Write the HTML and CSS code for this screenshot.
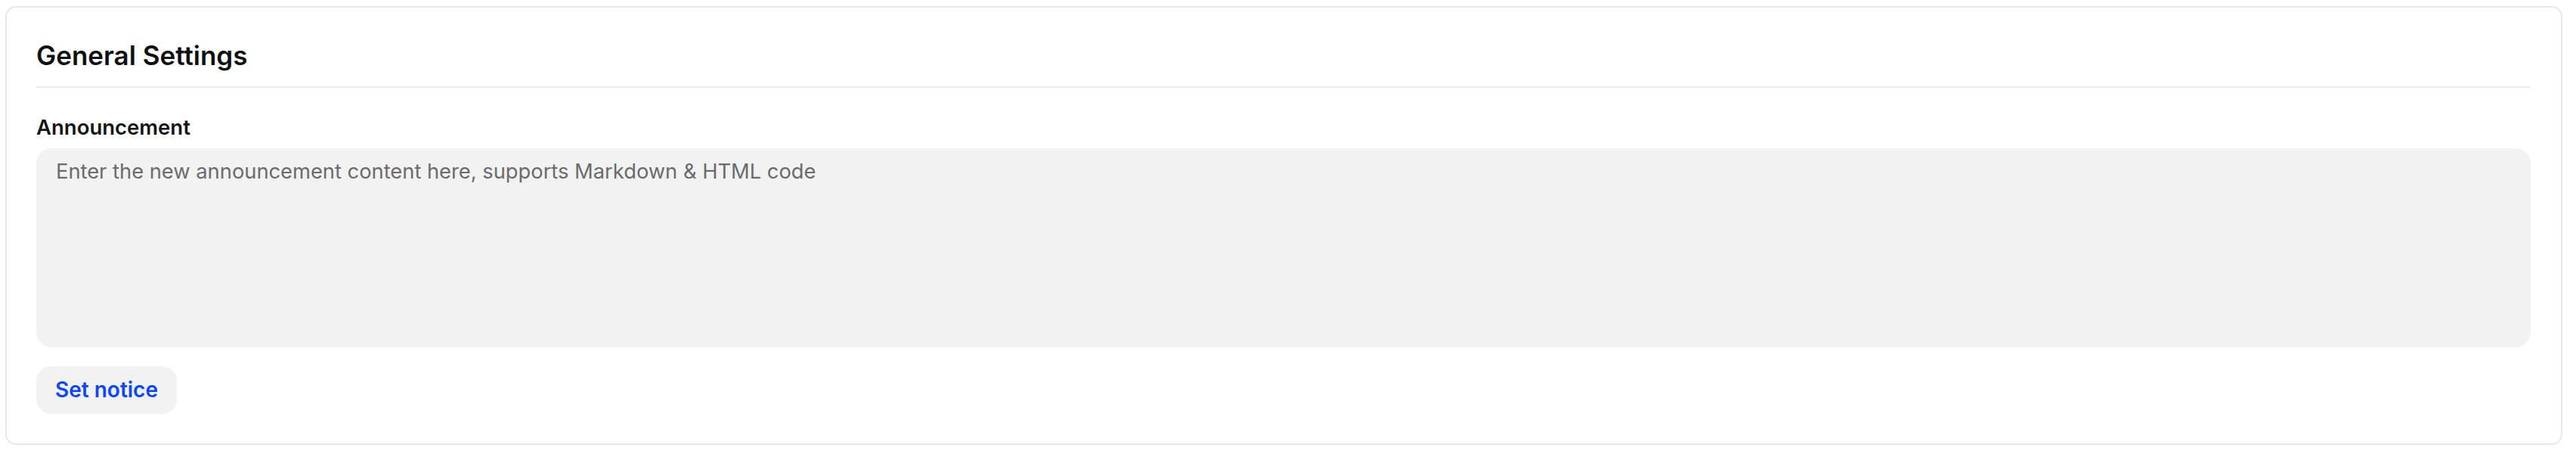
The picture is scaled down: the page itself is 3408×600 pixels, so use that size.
FILE: index.html
```html
<!DOCTYPE html>
<html lang="en">
<head>
  <meta charset="UTF-8">
  <title>General Settings</title>
  <link rel="stylesheet" href="styles.css">
</head>
<body>
  <div class="card">
    <h2 class="card-title">General Settings</h2>

    <div class="field">
      <label class="field-label" for="notice">Announcement</label>
      <textarea id="notice" class="notice-input" placeholder="Enter the new announcement content here, supports Markdown &amp; HTML code"></textarea>
    </div>

    <button class="set-notice">Set notice</button>
  </div>
</body>
</html>
```

FILE: styles.css
```css
  * {
    box-sizing: border-box;
    margin: 0;
    padding: 0;
  }

  body {
    background: white;
    font-family: "Inter", "Noto Sans", sans-serif;
    padding: 8px 18px 11px 7px;
  }

  .card {
    background: white;
    border: 2px solid #e8e8e8;
    border-radius: 14px;
    padding: 39px 40px 39px 39px;
    display: flex;
    flex-direction: column;
    align-items: flex-start;
  }

  .card-title {
    width: 100%;
    font-size: 35px;
    font-weight: 600;
    line-height: 48px;
    color: #111113;
    padding-bottom: 17px;
    border-bottom: 2px solid #ececec;
  }

  .field {
    width: 100%;
    display: flex;
    flex-direction: column;
    gap: 8px;
    margin-top: 33px;
  }

  .field-label {
    font-size: 27.5px;
    font-weight: 600;
    line-height: 39px;
    color: #151517;
  }

  .notice-input {
    width: 100%;
    height: 263px;
    padding: 10px 26px;
    background: #f2f2f2;
    border: none;
    outline: none;
    border-radius: 20px;
    resize: none;
    font-family: "Inter", "Noto Sans", sans-serif;
    font-size: 27.3px;
    line-height: 42px;
    color: #222;
  }

  .notice-input::placeholder {
    color: #6b6b6b;
  }

  .set-notice {
    margin-top: 25px;
    padding: 10px 25px;
    background: #f2f2f2;
    color: #0a45ff;
    border: none;
    border-radius: 20px;
    font-family: "Inter", "Noto Sans", sans-serif;
    font-size: 28px;
    font-weight: 600;
    line-height: 43px;
    cursor: pointer;
  }
```
